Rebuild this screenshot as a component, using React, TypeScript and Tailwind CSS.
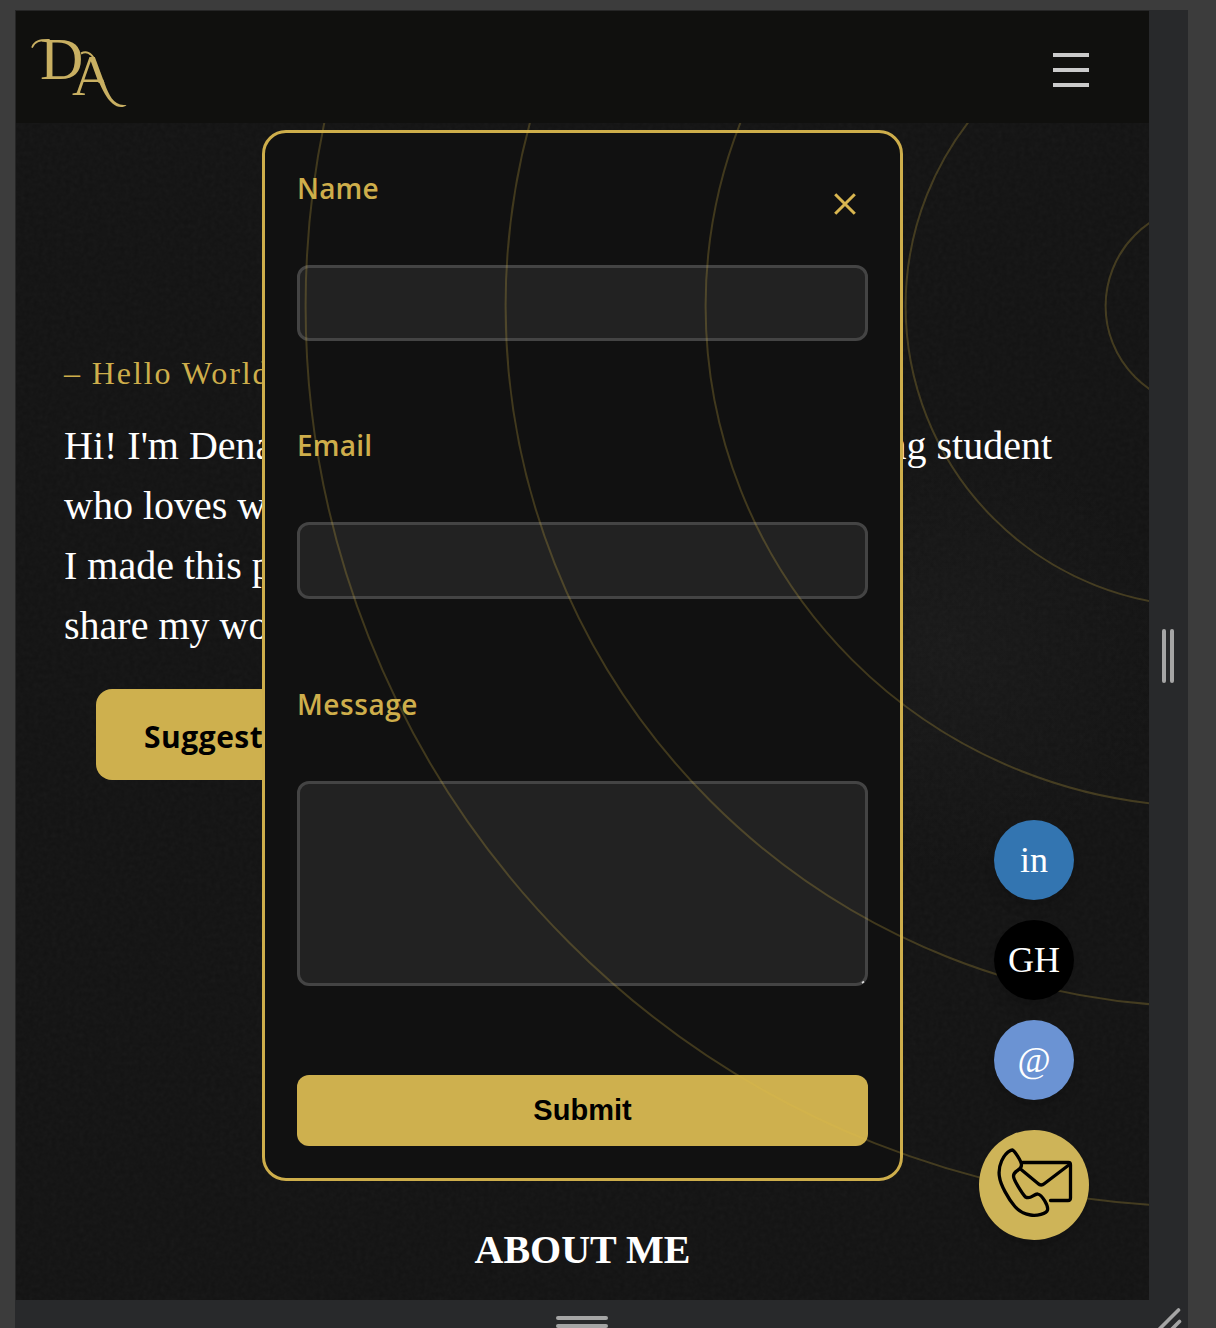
import React from "react";

const RINGS = [100, 300, 500, 700, 900];

/* Gold monogram with swashes */
function Logo() {
  return (
    <svg className="h-[80px] w-[104px]" viewBox="28 32 104 80" fill="none" aria-label="DA">
      <defs>
        <clipPath id="leg">
          <path d="M60 50H125V83H90V100H60Z" />
        </clipPath>
      </defs>
      <text x="40" y="79" fontFamily="Liberation Serif" fontSize="60" fill="#c9b062">D</text>
      <text x="72" y="94.5" fontFamily="Liberation Serif" fontSize="57" fill="#c9b062" clipPath="url(#leg)">A</text>
      <path d="M32.3 47C34.5 41.5 39 39.8 49 40" stroke="#c9b062" strokeWidth="1.8" strokeLinecap="round" />
      <path d="M81 53.5C86 51 91 52.5 94 59" stroke="#c9b062" strokeWidth="2" />
      <path d="M97.8 79.5L103.2 79.5C107.5 91 111 102 120 104.4C122.5 105 125 104.6 126.5 105.2C124 107.6 117.5 108.2 112.5 103.6C106 97.5 103 91 97.8 79.5Z" fill="#c9b062" />
    </svg>
  );
}

function Field({ label, className }: { label: string; className: string }) {
  return (
    <label className={`flex flex-col justify-between ${className}`}>
      <span className={label === "Message" ? "font-['Open_Sans'] text-[28px] leading-[40px] font-semibold tracking-[0.55px] text-[#ceae4b]" : "font-['Open_Sans'] text-[28px] leading-[40px] font-semibold tracking-[0.2px] text-[#ceae4b]"}>{label}</span>
      {label === "Message" ? (
        <textarea className="block h-[205px] w-full resize-none rounded-xl border-3 border-[#444] bg-[#222]" />
      ) : (
        <input className={label === "Email" ? "block h-[77px] w-full rounded-xl border-3 border-[#444] bg-[#222]" : "block h-[76px] w-full rounded-xl border-3 border-[#444] bg-[#222]"} />
      )}
    </label>
  );
}

function ContactModal() {
  return (
    <form className="absolute top-[119px] left-[246px] flex h-[1051px] w-[641px] flex-col rounded-[24px] border-3 border-[#ceae4b] bg-[#111] px-8">
      <Field label="Name" className="mt-[35px] h-[173px]" />
      <Field label="Email" className="mt-[84px] h-[174px]" />
      <Field label="Message" className="mt-[85px] h-[302px]" />
      <button type="button" className="mt-[89px] h-[71px] rounded-xl bg-[#ceb04e] font-['Liberation_Sans'] text-[29px] font-bold text-black">
        Submit
      </button>
      <svg className="absolute top-[59px] right-[43px] size-[24px]" viewBox="0 0 24 24" stroke="#d9b650" strokeWidth="3">
        <path d="M2.2 2.2L21.8 21.8M21.8 2.2L2.2 21.8" />
      </svg>
      <svg className="absolute top-[846px] right-[35px] size-[5px]" viewBox="0 0 5 5" stroke="#ddd" strokeWidth="1.8">
        <path d="M2 4L4 2.6" />
      </svg>
    </form>
  );
}

function SocialButtons() {
  return (
    <div className="absolute top-[809px] left-[963px] flex w-[110px] flex-col items-center gap-5 font-['Liberation_Serif'] text-[36px] text-white">
      <a className="flex size-20 items-center justify-center rounded-full bg-[#3375b1] shadow-lg">in</a>
      <a className="flex size-20 items-center justify-center rounded-full bg-black shadow-lg">GH</a>
      <a className="flex size-20 items-center justify-center rounded-full bg-[#6b93d3] shadow-lg">@</a>
      <a className="mt-2.5 flex size-[110px] items-center justify-center rounded-full bg-[#ceb458] shadow-lg">
        <svg className="size-[110px]" viewBox="-0.5 0 110 110" fill="none" stroke="#000" strokeWidth="3.3" strokeLinecap="round" strokeLinejoin="round">
          <path d="M33 20C35 21 42 31 42 35C42 41 34 40 34 46C34 50 43 64 46 67C51 70 54 64 58 64C63 65 69 76 68 80C67 84 57 86 51 85C45 84 39 81 35 76C29 69 21 55 20 47C18 36 24 24 31 20.5Q32 20 33 20Z" />
          <path d="M43 32.5H89Q91 32.5 91 35V68Q91 70.5 88.5 70.5H71" />
          <path d="M41 39L58.5 53.5Q61.5 56.5 65 53.5L90 34.5" />
        </svg>
      </a>
    </div>
  );
}

function Noise() {
  return (
    <svg className="pointer-events-none absolute inset-0 size-full opacity-[0.035]">
      <filter id="grain">
        <feTurbulence type="fractalNoise" baseFrequency="0.22" numOctaves="2" seed="3" />
        <feColorMatrix type="saturate" values="0" />
      </filter>
      <rect width="100%" height="100%" filter="url(#grain)" />
    </svg>
  );
}

export default function App() {
  return (
    <div className="h-[1328px] w-[1216px] overflow-hidden bg-[#3c3c3c] pt-[10px] pl-[15px]">
      <div className="grid h-[1318px] w-[1173px] grid-cols-[1134px_39px] grid-rows-[1290px_28px] bg-[#28292b]">
        <div className="relative overflow-hidden border-t border-l border-[#262626] bg-[#131313] bg-[radial-gradient(circle_at_930px_640px,#191919_0,#131313_220px)]">
          <Noise />
          <header className="relative flex h-[112px] items-center justify-between bg-[#10100e] pr-[60px] pl-[12px]">
            <div className="pt-[10px]">
              <Logo />
            </div>
            <div className="mt-[6px] flex w-[36px] flex-col gap-[11px]">
              <span className="h-1 bg-[#cbcbcb]" />
              <span className="h-1 bg-[#cbcbcb]" />
              <span className="h-1 bg-[#cbcbcb]" />
            </div>
          </header>
          <main className="relative flex flex-col items-start px-12 pt-[230px] font-['Liberation_Serif'] text-white">
            <p className="h-[40px] text-[32px] leading-[40px] tracking-[1.9px] text-[#ceae4b]">– Hello World</p>
            <div className="mt-[23px] w-[988px] text-[40px] leading-[60px]">
              <p className="flex justify-between">
                <span>Hi! I'm Dena</span>
                <span>ng student</span>
              </p>
              <p>who loves w</p>
              <p>I made this p</p>
              <p>share my wo</p>
            </div>
            <button className="mt-[33px] ml-8 h-[91px] w-[240px] rounded-2xl bg-[#ceb04e] pt-1 pl-12 text-left font-['Open_Sans'] text-[30px] font-bold tracking-[0.5px] text-black">
              Suggest
            </button>
            <h2 className="mt-[440px] self-center text-[40px] leading-[60px] font-bold">ABOUT ME</h2>
          </main>
          <ContactModal />
          <svg className="pointer-events-none absolute top-[112px] left-0 h-[1177px] w-[1133px]" viewBox="16 123 1133 1177" fill="none" stroke="#dfbd46" strokeOpacity="0.23" strokeWidth="2">
            {RINGS.map((r) => (
              <circle key={r} cx="1206" cy="306" r={r + 0.4} />
            ))}
          </svg>
          <SocialButtons />
        </div>
        <div className="mt-px -ml-0.5 flex items-center justify-center gap-1">
          <span className="h-[54px] w-1 rounded-full bg-[#a5a5a5]" />
          <span className="h-[54px] w-1 rounded-full bg-[#a5a5a5]" />
        </div>
        <div className="flex flex-col items-center gap-1 pt-4">
          <span className="h-1 w-[52px] rounded-full bg-[#a5a5a5]" />
          <span className="h-1 w-[52px] rounded-full bg-[#a5a5a5]" />
        </div>
        <svg className="h-[28px] w-[39px]" viewBox="0 0 39 28" stroke="#a5a5a5" strokeWidth="3.6" strokeLinecap="round">
          <path d="M29.5 10L8 31.5M30.5 21.5L18 34" />
        </svg>
      </div>
    </div>
  );
}
